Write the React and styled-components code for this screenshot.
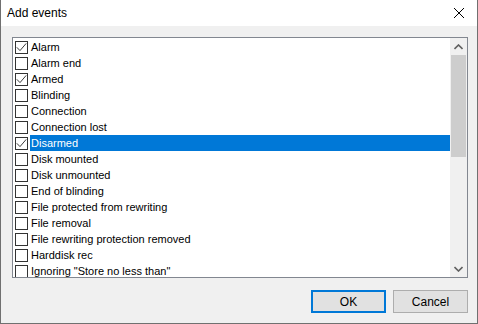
import React from "react";
import styled, { createGlobalStyle } from "styled-components";

const Global = createGlobalStyle`
  html, body { margin: 0; padding: 0; background: #f0f0f0; }
  body { font-family: "Liberation Sans", "Noto Sans", sans-serif; font-size: 12px; }
  * { box-sizing: border-box; }
`;

const Window = styled.div`
  width: 478px;
  height: 324px;
  background: #f0f0f0;
  border: 1px solid #707070;
  border-top: none;
  display: flex;
  flex-direction: column;
`;

const TitleBar = styled.div`
  height: 26px;
  background: #ffffff;
  display: flex;
  align-items: center;
  justify-content: space-between;
  padding-left: 6px;
  padding-right: 12px;
  font-size: 12px;
  color: #000;
`;

const Body = styled.div`
  flex: 1;
  display: flex;
  flex-direction: column;
  padding: 11px 9px 10px 11px;
`;

const ListBox = styled.div`
  height: 241px;
  border: 1px solid #828790;
  background: #fff;
  display: flex;
  overflow: hidden;
`;

const Items = styled.div`
  flex: 1;
  padding-top: 1px;
  padding-left: 1px;
  font-size: 11px;
`;

const Row = styled.div`
  height: 16px;
  display: flex;
  align-items: center;
`;

const Box = styled.span`
  width: 13px;
  height: 13px;
  border: 1px solid #333;
  background: #fff;
  margin-left: 1px;
  margin-right: 2px;
  display: flex;
  align-items: center;
  justify-content: center;
  flex: none;
`;

const Label = styled.span`
  flex: 1;
  height: 16px;
  line-height: 17px;
  padding-left: 1px;
  background: ${(p) => (p.$sel ? "#0078d7" : "transparent")};
  color: ${(p) => (p.$sel ? "#fff" : "#000")};
  white-space: nowrap;
`;

const ScrollBar = styled.div`
  width: 17px;
  background: #f0f0f0;
  display: flex;
  flex-direction: column;
  flex: none;
`;

const Arrow = styled.div`
  height: 17px;
  display: flex;
  align-items: center;
  justify-content: center;
`;

const Track = styled.div`
  flex: 1;
  display: flex;
  flex-direction: column;
`;

const Thumb = styled.div`
  margin: 0 1px;
  height: 102px;
  background: #cdcdcd;
`;

const Footer = styled.div`
  display: flex;
  justify-content: flex-end;
  gap: 7px;
  margin-top: 12px;
`;

const Button = styled.button`
  width: 75px;
  height: 23px;
  font-family: inherit;
  font-size: 12px;
  color: #000;
  background: #e1e1e1;
  border: 1px solid ${(p) => (p.$default ? "#0078d7" : "#adadad")};
  box-shadow: ${(p) => (p.$default ? "inset 0 0 0 1px #0078d7" : "none")};
  padding: 0;
`;

const Check = () => (
  <svg width="11" height="11" viewBox="0 0 11 11">
    <path d="M0.8 5.3 L4 8.6 L10.2 1.4" fill="none" stroke="#3c3c3c" strokeWidth="1" />
  </svg>
);

const items = [
  ["Alarm", true],
  ["Alarm end", false],
  ["Armed", true],
  ["Blinding", false],
  ["Connection", false],
  ["Connection lost", false],
  ["Disarmed", true, true],
  ["Disk mounted", false],
  ["Disk unmounted", false],
  ["End of blinding", false],
  ["File protected from rewriting", false],
  ["File removal", false],
  ["File rewriting protection removed", false],
  ["Harddisk rec", false],
  ['Ignoring "Store no less than"', false],
];

export default function App() {
  return (
    <>
      <Global />
      <Window>
        <TitleBar>
          <span>Add events</span>
          <svg width="12" height="12" viewBox="0 0 12 12">
            <path d="M1 1 L11 11 M11 1 L1 11" stroke="#000" strokeWidth="1" />
          </svg>
        </TitleBar>
        <Body>
          <ListBox>
            <Items>
              {items.map(([t, c, s]) => (
                <Row key={t}>
                  <Box>{c && <Check />}</Box>
                  <Label $sel={s}>{t}</Label>
                </Row>
              ))}
            </Items>
            <ScrollBar>
              <Arrow>
                <svg width="9" height="6" viewBox="0 0 9 6">
                  <path d="M0.5 5 L4.5 1 L8.5 5" fill="none" stroke="#606060" strokeWidth="1.6" />
                </svg>
              </Arrow>
              <Track>
                <Thumb />
              </Track>
              <Arrow>
                <svg width="9" height="6" viewBox="0 0 9 6">
                  <path d="M0.5 1 L4.5 5 L8.5 1" fill="none" stroke="#606060" strokeWidth="1.6" />
                </svg>
              </Arrow>
            </ScrollBar>
          </ListBox>
          <Footer>
            <Button $default>OK</Button>
            <Button>Cancel</Button>
          </Footer>
        </Body>
      </Window>
    </>
  );
}
